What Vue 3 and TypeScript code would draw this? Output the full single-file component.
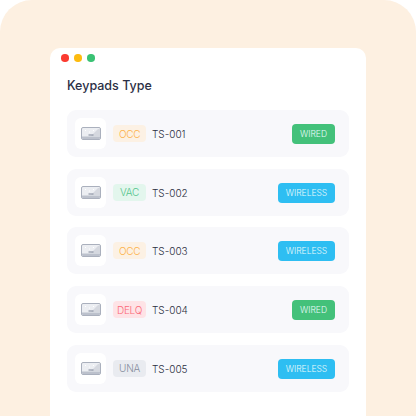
<script setup lang="ts">
type Keypad = {
  id: string;
  status: string;
  statusClass: string;
  link: 'WIRED' | 'WIRELESS';
};

const keypads: Keypad[] = [
  { id: 'TS-001', status: 'OCC', statusClass: 'occ', link: 'WIRED' },
  { id: 'TS-002', status: 'VAC', statusClass: 'vac', link: 'WIRELESS' },
  { id: 'TS-003', status: 'OCC', statusClass: 'occ', link: 'WIRELESS' },
  { id: 'TS-004', status: 'DELQ', statusClass: 'delq', link: 'WIRED' },
  { id: 'TS-005', status: 'UNA', statusClass: 'una', link: 'WIRELESS' },
];
</script>

<template>
  <div class="page">
    <section class="window">
      <div class="dots">
        <span class="dot red"></span>
        <span class="dot yellow"></span>
        <span class="dot green"></span>
      </div>
      <h1 class="title">Keypads Type</h1>
      <ul class="list">
        <li v-for="item in keypads" :key="item.id" class="row">
          <div class="icon-box">
            <svg width="20" height="13" viewBox="0 0 20 13" fill="none">
              <rect x="0.5" y="0.5" width="19" height="12" rx="1.5" fill="#eceef2" stroke="#aab0bd" />
              <path d="M10 9 17 2h2v7z" fill="#d5d8df" />
              <path d="M1 9.5h18V11a1 1 0 0 1-1 1H2a1 1 0 0 1-1-1z" fill="#bcc1cc" />
              <path d="M7.5 8h5" stroke="#7f8698" stroke-width="1" />
              <path d="M4 3.5h1M8 5h1M12 3.5h1" stroke="#fff" stroke-width="1" />
            </svg>
          </div>
          <span class="status" :class="item.statusClass">{{ item.status }}</span>
          <span class="code">{{ item.id }}</span>
          <span class="link" :class="item.link === 'WIRED' ? 'wired' : 'wireless'">{{ item.link }}</span>
        </li>
      </ul>
    </section>
  </div>
</template>

<style scoped>
.page {
  box-sizing: border-box;
  width: 416px;
  height: 416px;
  padding: 48px 50px 0;
  background: #fdf0e1;
  border-radius: 32px 32px 0 0;
  overflow: hidden;
  font-family: Inter, "Liberation Sans", sans-serif;
}

.window {
  height: 368px;
  padding: 6px 17px 0;
  box-sizing: border-box;
  background: #fff;
  border-radius: 10px 10px 0 0;
}

.dots {
  display: flex;
  gap: 5.5px;
  margin-left: -6px;
}

.dot {
  width: 7.5px;
  height: 7.5px;
  border-radius: 50%;
}

.red { background: #fb3b30; }
.yellow { background: #fdbb0f; }
.green { background: #3ac274; }

.title {
  margin: 15px 0 15.5px;
  font-size: 12.5px;
  line-height: 18px;
  font-weight: 500;
  color: #2b2f45;
}

.list {
  display: flex;
  flex-direction: column;
  gap: 11.7px;
  margin: 0;
  padding: 0;
  list-style: none;
}

.row {
  display: flex;
  align-items: center;
  height: 47px;
  padding: 0 14px 0 8px;
  background: #f8f8fb;
  border-radius: 9px;
}

.icon-box {
  display: flex;
  align-items: center;
  justify-content: center;
  width: 31px;
  height: 31px;
  background: #fff;
  border-radius: 6px;
}

.status {
  display: flex;
  align-items: center;
  justify-content: center;
  width: 33px;
  height: 17px;
  margin-left: 7px;
  border-radius: 4px;
  font-size: 10px;
  font-weight: 300;
  letter-spacing: -0.3px;
}

.occ { background: #fcf1e4; color: #fdb14a; }
.vac { background: #e3f6ed; color: #52c48c; }
.delq { background: #fee3e6; color: #fb6a7a; }
.una { background: #e9ebf0; color: #858b9c; }

.code {
  margin-left: 6px;
  padding-top: 1px;
  font-size: 10px;
  font-weight: 300;
  color: #2b2f40;
}

.link {
  display: flex;
  align-items: center;
  justify-content: center;
  width: 43px;
  height: 20px;
  margin-top: 1px;
  margin-left: auto;
  border-radius: 4px;
  font-size: 8.5px;
  font-weight: 300;
  color: #eafafa;
}

.wireless { width: 57px; }

.wired { background: #43c17a; }
.wireless { background: #2ebef2; }
</style>
